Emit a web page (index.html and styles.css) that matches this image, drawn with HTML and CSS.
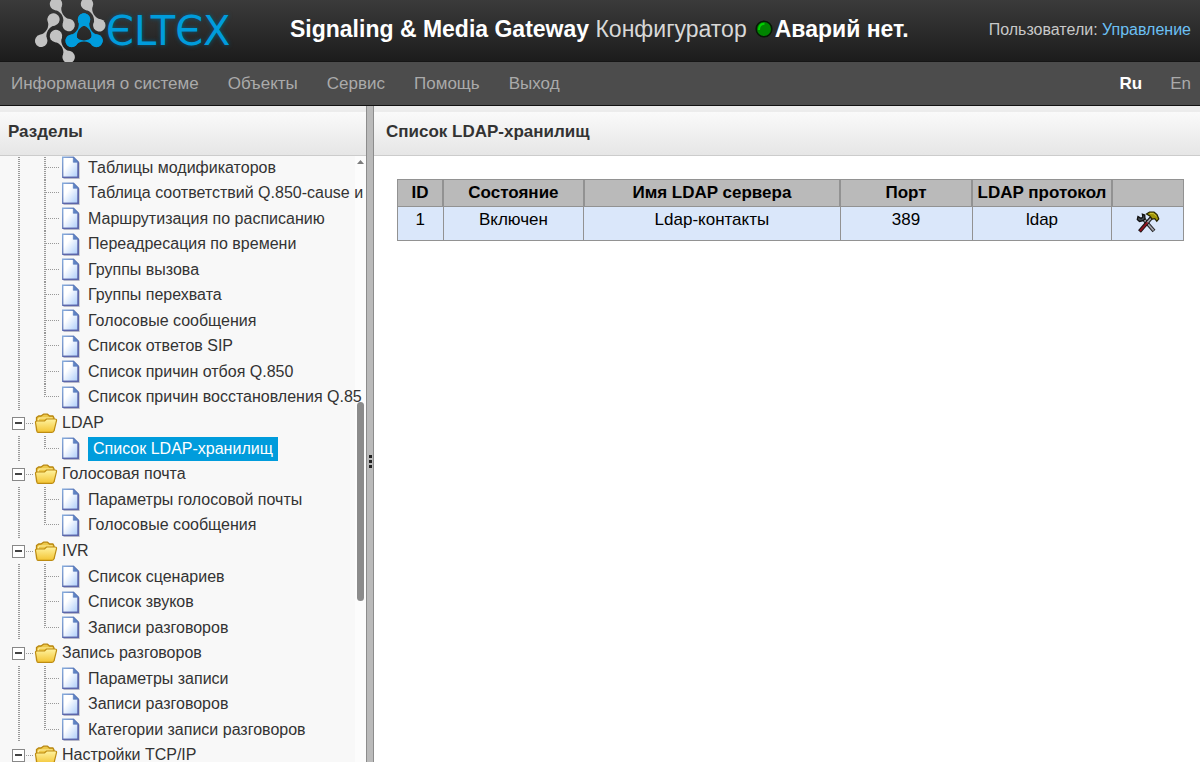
FILE: index.html
```html
<!DOCTYPE html>
<html lang="ru">
<head>
<meta charset="utf-8">
<title>Signaling &amp; Media Gateway Конфигуратор</title>
<link rel="stylesheet" href="styles.css">
</head>
<body>
<svg class="defs" aria-hidden="true">
  <defs>
    <linearGradient id="paper" x1="0" y1="0" x2="1" y2="1"><stop offset="0.35" stop-color="#fff"/><stop offset="1" stop-color="#a9cbfa"/></linearGradient>
    <linearGradient id="edge" x1="0" y1="0" x2="1" y2="1"><stop offset="0" stop-color="#86abdc"/><stop offset="1" stop-color="#50569a"/></linearGradient>
    <linearGradient id="gold" x1="0" y1="0" x2="0" y2="1"><stop offset="0" stop-color="#fff3a0"/><stop offset="1" stop-color="#f3c433"/></linearGradient>
    <symbol id="doc" viewBox="0 0 20 23">
      <path d="M3 3H15L19 7V23H3Z" fill="#bbb" opacity=".6"/>
      <path d="M1.7 1.2H12.5L17.2 6V21.4H1.7Z" fill="url(#paper)" stroke="url(#edge)" stroke-width="1.4"/>
      <path d="M12.3 1V6.3H17.4Z" fill="#5f83c4" stroke="#5277b8" stroke-width=".6"/>
      <path d="M17.3 6.5V21.4H2" fill="none" stroke="#5c66aa" stroke-width="1.5"/>
    </symbol>
    <symbol id="folder" viewBox="0 0 23 21">
      <path d="M2 17V4.5L4 3H6.5L9 1.2H13L15 3H18.5L19.5 5V17Z" fill="#edc84a" stroke="#b8860f" stroke-width="1.3" stroke-linejoin="round"/>
      <path d="M3.8 15V6.5L5 5H18" fill="none" stroke="#fff0a0" stroke-width="1.2"/>
      <path d="M2.5 18.6L1 9.5Q.8 8 2.5 8H10L12 6H20.5Q22.3 6 22 7.6L19.6 17.6Q19.2 19.2 17.5 19.3H4Q2.7 19.4 2.5 18.6Z" fill="url(#gold)" stroke="#bd8c12" stroke-width="1.2"/>
    </symbol>
    <g id="molecule">
      <circle r="6.2"/><circle cx="24.6" r="6.2"/>
      <path d="M4.5-4Q7-.9 12.3-.6Q17.6-.9 20.1-4V4Q17.6.9 12.3.6Q7 .9 4.5 4Z"/>
    </g>
  </defs>
</svg>

<header class="top">
  <a class="logo" href="#" aria-label="ELTEX">
    <svg class="logo-mark" viewBox="34 0 72 62" aria-hidden="true">
      <g fill="#c2c2c2">
        <use href="#molecule" transform="translate(56 4) rotate(59)"/>
        <use href="#molecule" transform="translate(87 4) rotate(60)"/>
        <use href="#molecule" transform="translate(53.5 19.5) rotate(120)"/>
        <use href="#molecule" transform="translate(56 36) rotate(59)"/>
      </g>
      <g fill="#009cdc">
        <use href="#molecule" transform="translate(84 19.5) rotate(120)"/>
        <use href="#molecule" transform="translate(84 19.5) rotate(59)"/>
        <use href="#molecule" transform="translate(71.7 41)"/>
      </g>
    </svg>
    <span class="logo-word">ЄLTЄX</span>
  </a>
  <h1 class="title"><strong>Signaling &amp; Media Gateway</strong> Конфигуратор</h1>
  <p class="alarm"><svg class="led" viewBox="0 0 18 18" aria-hidden="true"><circle cx="9" cy="9" r="7.8" fill="#008400" stroke="#061806" stroke-width="1.6"/><path d="M4 10Q4 4 9.5 3.8" fill="none" stroke="#00d000" stroke-width="2"/></svg>Аварий нет.</p>
  <p class="users">Пользователи: <a href="#">Управление</a></p>
</header>

<nav class="menu">
  <a href="#">Информация о системе</a>
  <a href="#">Объекты</a>
  <a href="#">Сервис</a>
  <a href="#">Помощь</a>
  <a href="#">Выход</a>
  <span class="langs"><a class="current" href="#">Ru</a><a href="#">En</a></span>
</nav>

<div class="workspace">
  <aside class="sidebar">
    <h2 class="panel-title">Разделы</h2>
    <div class="tree-area">
      <ul class="tree">
        <li>
          <ul class="leaves">
            <li><a href="#"><svg class="doc"><use href="#doc"/></svg><span>Таблицы модификаторов</span></a></li>
            <li><a href="#"><svg class="doc"><use href="#doc"/></svg><span>Таблица соответствий Q.850-cause и</span></a></li>
            <li><a href="#"><svg class="doc"><use href="#doc"/></svg><span>Маршрутизация по расписанию</span></a></li>
            <li><a href="#"><svg class="doc"><use href="#doc"/></svg><span>Переадресация по времени</span></a></li>
            <li><a href="#"><svg class="doc"><use href="#doc"/></svg><span>Группы вызова</span></a></li>
            <li><a href="#"><svg class="doc"><use href="#doc"/></svg><span>Группы перехвата</span></a></li>
            <li><a href="#"><svg class="doc"><use href="#doc"/></svg><span>Голосовые сообщения</span></a></li>
            <li><a href="#"><svg class="doc"><use href="#doc"/></svg><span>Список ответов SIP</span></a></li>
            <li><a href="#"><svg class="doc"><use href="#doc"/></svg><span>Список причин отбоя Q.850</span></a></li>
            <li><a href="#"><svg class="doc"><use href="#doc"/></svg><span>Список причин восстановления Q.85</span></a></li>
          </ul>
        </li>
        <li>
          <div class="branch"><button class="toggle" aria-label="Свернуть LDAP"></button><a href="#"><svg class="folder"><use href="#folder"/></svg><span>LDAP</span></a></div>
          <ul class="leaves">
            <li><a class="selected" href="#"><svg class="doc"><use href="#doc"/></svg><span>Список LDAP-хранилищ</span></a></li>
          </ul>
        </li>
        <li>
          <div class="branch"><button class="toggle" aria-label="Свернуть Голосовая почта"></button><a href="#"><svg class="folder"><use href="#folder"/></svg><span>Голосовая почта</span></a></div>
          <ul class="leaves">
            <li><a href="#"><svg class="doc"><use href="#doc"/></svg><span>Параметры голосовой почты</span></a></li>
            <li><a href="#"><svg class="doc"><use href="#doc"/></svg><span>Голосовые сообщения</span></a></li>
          </ul>
        </li>
        <li>
          <div class="branch"><button class="toggle" aria-label="Свернуть IVR"></button><a href="#"><svg class="folder"><use href="#folder"/></svg><span>IVR</span></a></div>
          <ul class="leaves">
            <li><a href="#"><svg class="doc"><use href="#doc"/></svg><span>Список сценариев</span></a></li>
            <li><a href="#"><svg class="doc"><use href="#doc"/></svg><span>Список звуков</span></a></li>
            <li><a href="#"><svg class="doc"><use href="#doc"/></svg><span>Записи разговоров</span></a></li>
          </ul>
        </li>
        <li>
          <div class="branch"><button class="toggle" aria-label="Свернуть Запись разговоров"></button><a href="#"><svg class="folder"><use href="#folder"/></svg><span>Запись разговоров</span></a></div>
          <ul class="leaves">
            <li><a href="#"><svg class="doc"><use href="#doc"/></svg><span>Параметры записи</span></a></li>
            <li><a href="#"><svg class="doc"><use href="#doc"/></svg><span>Записи разговоров</span></a></li>
            <li><a href="#"><svg class="doc"><use href="#doc"/></svg><span>Категории записи разговоров</span></a></li>
          </ul>
        </li>
        <li>
          <div class="branch"><button class="toggle" aria-label="Свернуть Настройки TCP/IP"></button><a href="#"><svg class="folder"><use href="#folder"/></svg><span>Настройки TCP/IP</span></a></div>
        </li>
      </ul>
      <div class="scrollbar" aria-hidden="true">
        <svg class="scroll-up" viewBox="0 0 7 4"><path d="M0 4L3.5 0L7 4Z" fill="#7c7c7c"/></svg>
        <div class="thumb"></div>
      </div>
    </div>
  </aside>

  <div class="splitter" role="separator" aria-orientation="vertical"><i></i><i></i><i></i></div>

  <main class="content">
    <h2 class="panel-title">Список LDAP-хранилищ</h2>
    <div class="content-body">
      <table class="grid">
        <colgroup><col class="c-id"><col class="c-state"><col class="c-name"><col class="c-port"><col class="c-proto"><col class="c-act"></colgroup>
        <thead>
          <tr><th>ID</th><th>Состояние</th><th>Имя LDAP сервера</th><th>Порт</th><th>LDAP протокол</th><th></th></tr>
        </thead>
        <tbody>
          <tr>
            <td>1</td><td>Включен</td><td>Ldap-контакты</td><td>389</td><td>ldap</td>
            <td><button class="edit" aria-label="Редактировать">
              <svg viewBox="0 0 24 23" aria-hidden="true">
                <path d="M7.5 9L18 21" stroke="#222" stroke-width="3.8"/>
                <path d="M8 9.5L17.6 20.5" stroke="#a5a5ad" stroke-width="1.9"/>
                <path d="M15.5 7.5L3.5 21.5" stroke="#111" stroke-width="3.8"/>
                <path d="M14.8 8.5L10.5 13.5" stroke="#a5a5ad" stroke-width="1.8"/>
                <path d="M11.5 12.3L4 21" stroke="#8c1420" stroke-width="2"/>
                <path d="M2 6.5L1.3 9.5L3.5 11.5L7 10.7L9 9L8.7 5L6.4 4.2L6.8 7L5 8.4Z" fill="#444b50" stroke="#111" stroke-width="1.3"/>
                <path d="M10.5 4L13.5 2H18L21 4.5L22.8 9L20.8 11.3L18.8 8.6L16.2 9L13.8 6Z" fill="#a09508" stroke="#242200" stroke-width="1.2"/>
                <path d="M14 3.6H17.5L20.2 6.4" fill="none" stroke="#cfc53a" stroke-width="1"/>
              </svg>
            </button></td>
          </tr>
        </tbody>
      </table>
    </div>
  </main>
</div>
</body>
</html>
```
FILE: styles.css
```css
* { box-sizing: border-box; }

body {
  margin: 0;
  height: 100vh;
  display: flex;
  flex-direction: column;
  overflow: hidden;
  font: 16px/20px "Liberation Sans", Arial, sans-serif;
  color: #333;
  background: #fff;
}

h1, h2, p, ul { margin: 0; padding: 0; }
ul { list-style: none; }
a { color: inherit; text-decoration: none; }
button { padding: 0; border: 0; background: none; cursor: pointer; }
.defs { position: absolute; width: 0; height: 0; }

.top {
  flex: none;
  display: flex;
  align-items: center;
  height: 62px;
  padding: 0 9px 0 34px;
  background: linear-gradient(#3b3b3b, #1c1c1c);
  border-bottom: 1px solid #161616;
  white-space: nowrap;
}
.logo { display: flex; align-items: center; width: 256px; }
.logo-mark { flex: none; width: 72px; height: 62px; }
.logo-word {
  font: 40px/62px "DejaVu Sans", sans-serif;
  color: #009cdc;
  text-shadow: 0 0 4px #06597c;
}
.title { font-size: 23px; line-height: 28px; font-weight: normal; color: #d8d8d8; padding-bottom: 4px; }
.title strong { color: #fff; }
.alarm {
  display: flex;
  align-items: center;
  gap: 2px;
  margin-left: 8px;
  padding-bottom: 4px;
  font-size: 23px;
  line-height: 28px;
  font-weight: bold;
  color: #fff;
}
.led { width: 18px; height: 18px; }
.users { margin-left: auto; font-size: 16px; color: #c8c8c8; padding-bottom: 2px; }
.users a { color: #6cc0f4; }

.menu {
  flex: none;
  display: flex;
  align-items: center;
  gap: 29px;
  height: 44px;
  padding: 0 9px 0 11px;
  background: #4c4c4c;
  border-bottom: 1px solid #111;
  font-size: 17px;
  color: #aaa;
}
.langs { display: flex; gap: 28px; margin-left: auto; }
.langs .current { font-weight: bold; color: #fff; }

.workspace { flex: 1; min-height: 0; display: flex; }
.panel-title {
  flex: none;
  height: 50px;
  padding: 0 12px;
  border-top: 6px solid #ececec;
  border-bottom: 1px solid #ccc;
  background: linear-gradient(#fafafa, #e6e6e6);
  font-size: 17px;
  line-height: 39px;
}
.sidebar { flex: none; width: 366px; display: flex; flex-direction: column; background: #f8f8f8; }
.sidebar .panel-title { padding-left: 8px; }

.tree-area {
  flex: 1;
  min-height: 0;
  position: relative;
  overflow: hidden;
  background: linear-gradient(#fcfcfc, #fcfcfc) right / 11px 100% no-repeat;
}
.tree { margin-top: -1px; white-space: nowrap; }
.tree a { display: flex; align-items: center; }
.leaves {
  padding-left: 44px;
  background: repeating-linear-gradient(#999 0 1px, transparent 1px 2px) 18px 0 / 2px 100% no-repeat;
}
.leaves li {
  height: 25px;
  padding-left: 17px;
  background:
    repeating-linear-gradient(#999 0 1px, transparent 1px 2px) 0 0 / 2px 100% no-repeat,
    repeating-linear-gradient(90deg, #999 0 1px, transparent 1px 2px) 0 12px / 16px 1px no-repeat;
}
.leaves li:nth-child(even) { height: 26px; }
.leaves li:last-child { background-size: 2px 12px, 16px 1px; }
.leaves a { gap: 7px; height: 100%; }
.doc { flex: none; width: 20px; height: 23px; }
.selected span { padding: 0 5px; line-height: 24px; color: #fff; background: #009cdc; }
.branch { display: flex; align-items: center; height: 26px; padding-left: 12px; }
.branch a {
  gap: 4px;
  padding-left: 9px;
  background: repeating-linear-gradient(90deg, #999 0 1px, transparent 1px 2px) 1px 50% / 8px 1px no-repeat;
}
.folder { width: 24px; height: 21px; }
.toggle {
  width: 13px;
  height: 13px;
  border: 1px solid #888;
  background: linear-gradient(#444, #444) center / 7px 2px no-repeat #fff;
}

.scrollbar { position: absolute; top: 0; right: 0; bottom: 0; width: 11px; padding: 4px 2px; }
.scroll-up { display: block; width: 7px; height: 4px; }
.thumb { width: 7px; height: 199px; margin-top: 238px; border-radius: 4px; background: #8b8b8b; }

.splitter {
  flex: none;
  width: 8px;
  display: flex;
  flex-direction: column;
  align-items: center;
  justify-content: center;
  gap: 2px;
  padding-top: 55px;
  border: solid #8c8c8c;
  border-width: 0 1px;
  background: #bababa;
}
.splitter i { width: 3px; height: 3px; background: #222; }

.content { flex: 1; min-width: 0; }
.content-body { padding: 23px 16px 23px 23px; }
.grid {
  width: 100%;
  table-layout: fixed;
  border-collapse: collapse;
  font-size: 17px;
  line-height: 20px;
  color: #000;
  text-align: center;
}
.grid th, .grid td { padding: 3px 0; border: 1px solid #929292; }
.grid th { background: #bababa; white-space: nowrap; }
.grid th + th { border-left-width: 2px; }
.grid td { height: 34px; background: #dae7fa; vertical-align: top; }
.c-id { width: 5.8%; }
.c-state { width: 17.9%; }
.c-name { width: 32.6%; }
.c-port { width: 16.8%; }
.c-proto { width: 17.8%; }
.c-act { width: 9.1%; }
.edit { display: block; margin: 0 auto; }
.edit svg { display: block; width: 24px; height: 23px; }
```
